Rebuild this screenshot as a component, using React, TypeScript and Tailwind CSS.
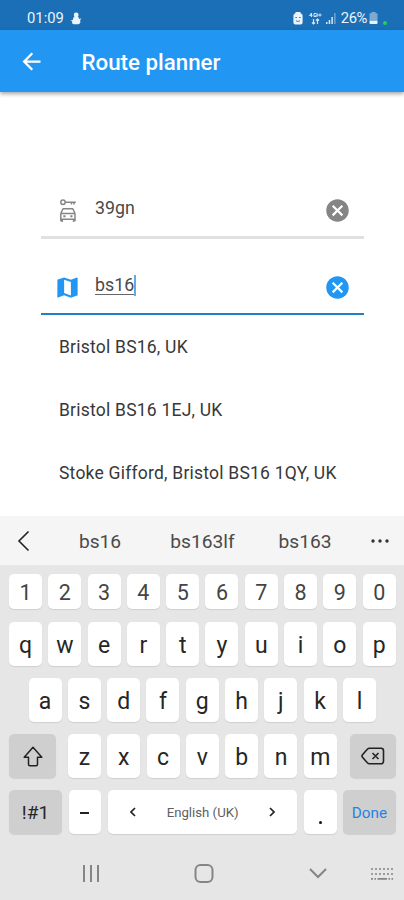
import type { ReactNode } from "react";
import { MdArrowBack, MdCancel, MdMap } from "react-icons/md";

function StatusBar() {
  return (
    <div className="flex h-[30px] items-center bg-[#1b6fb6] pt-[6px] pr-[17px] pl-[27px] text-[14.800px] text-[#eaf4fc]">
      <span className="mt-[1px] w-[43px] leading-none">01:09</span>
      <svg width="12" height="13" viewBox="0 0 12 13" fill="currentColor">
        <circle cx="6.2" cy="3" r="2.4" />
        <path d="M4.4 4.5 8 4.5 9.4 7l2-.8-1.3 2c1 2-.2 3.600-1.600 4H3.800C2 12 1.800 10.500 2.200 9.500L.5 8.400l2.400-.4C2.900 6.200 3.700 5.300 4.400 4.500Z" />
      </svg>
      <div className="ml-auto flex items-center">
        <svg className="mt-[1px]" width="10" height="13" viewBox="0 0 10 13">
          <path d="M2.500 0h5v1.200C9 1.600 9.600 2.600 9.600 4v6.500a2 2 0 0 1-2 2H2.400a2 2 0 0 1-2-2V4c0-1.400.6-2.400 2.100-2.800Z" fill="#eaf4fc" />
          <path d="M2.300 5.500h1.700M6 5.500h1.700M3 8.700c1.400 1 2.700 1 4 0" stroke="#4c7fac" strokeWidth="1" fill="none" />
        </svg>
        <svg className="mt-[1px] ml-[6px]" width="13" height="13" viewBox="0 0 13 13" stroke="#d5e6f4" fill="none">
          <path d="M2.500 5V1L.5 3.600h3M7 1.500H5v3h2V3M8 1v4M8 3h1.500M9.500 3h3M11 1.500v3" strokeWidth="1" />
          <path d="M4.500 7v5M3 10.500 4.500 12 6 10.500M8.500 12V7M7 8.500 8.500 7 10 8.500" strokeWidth="1.200" />
        </svg>
        <svg className="mt-[1px] ml-[3px]" width="12" height="12" viewBox="0 0 12 12" fill="#d5e6f4">
          <path d="M1 10h1.500v2H1zM3.700 8h1.500v4H3.700zM6.400 5h1.500v7H6.400z" />
          <path d="M9.100 1h1.500v11H9.100z" opacity=".45" />
        </svg>
        <span className="mt-[1px] ml-[4px] leading-none tracking-[-0.400px]">26%</span>
        <svg className="mt-[1px] ml-[2px]" width="9" height="12" viewBox="0 0 9 12">
          <path d="M2.500 0h4v1.200H8.500V8H.5V1.200h2Z" fill="#7fa9cf" />
          <path d="M.5 8.500h8v2.500a1 1 0 0 1-1 1h-6a1 1 0 0 1-1-1Z" fill="#eaf4fc" />
        </svg>
        <span className="mt-[10px] ml-[5px] h-1 w-1 rounded-full bg-[#22d05a]" />
      </div>
    </div>
  );
}

function Header() {
  return (
    <header className="relative flex h-[62px] shrink-0 items-center bg-[#2196f3] pt-[1px] pl-[18px] text-white shadow-[0_2px_4px_rgba(0,0,0,0.35)]">
      <MdArrowBack size={27} />
      <h1 className="mt-[2px] ml-[36.500px] text-[22.300px] font-medium">Route planner</h1>
    </header>
  );
}

function CarKeyIcon() {
  return (
    <svg className="ml-[5px]" width="18" height="24" viewBox="0 0 18 24" fill="none" stroke="currentColor" strokeWidth="1.500">
      <circle cx="4" cy="3.200" r="2.200" />
      <path d="M6.300 3.200H16.800M12.500 3.200v2.300M15 3.200v2.300" />
      <path d="M1.800 14.500 4 9.800h9.800l2.200 4.700M1.800 14.500v7.700M16 14.500v7.700M1.800 14.500h14.200M1.800 20.300h14.200M3.200 20.300v2.800M14.600 20.300v2.800" strokeLinejoin="round" />
      <path d="M4.300 17.200h2.200M11.300 17.200h2.200" strokeWidth="2" />
    </svg>
  );
}

function Field({ icon, children, active = false }: { icon: ReactNode; children: ReactNode; active?: boolean }) {
  return (
    <div
      className={
        active
          ? "flex h-[76px] items-center border-b-2 border-[#1f80c6] pt-[23px] pr-[13px] pl-[13px] text-[#2196f3]"
          : "flex h-[56px] items-center border-b-[3px] border-[#e0e0e0] pt-[2px] pr-[13px] pl-[13px] text-[#858585]"
      }
    >
      <span className="flex w-[41px]">{icon}</span>
      <span className="-mt-[5px] flex flex-1 items-center text-[17.800px] text-[#4a4a4a]">{children}</span>
      <MdCancel size={27} />
    </div>
  );
}

const places = ["Bristol BS16, UK", "Bristol BS16 1EJ, UK", "Stoke Gifford, Bristol BS16 1QY, UK"];

function Key({ children, className = "h-[43.500px] w-[33px] bg-white pt-[4px] text-[23px]" }: { children: ReactNode; className?: string }) {
  return (
    <div className={"flex shrink-0 items-center justify-center rounded-[5px] text-[#262626] shadow-[0_1px_1px_rgba(0,0,0,0.10)] " + className}>
      {children}
    </div>
  );
}

function Chevron({ d }: { d: string }) {
  return (
    <svg width="6" height="10" viewBox="0 0 6 10" fill="none" stroke="#222" strokeWidth="1.700">
      <path d={d} />
    </svg>
  );
}

function Keyboard() {
  return (
    <section className="flex flex-1 flex-col bg-[#e6e6e6]">
      <div className="flex h-[49px] shrink-0 items-center bg-[#f5f5f5] text-[19.200px] text-[#4a4a4a]">
        <svg className="ml-[17px]" width="13" height="22" viewBox="0 0 13 22" fill="none" stroke="#222" strokeWidth="1.600">
          <path d="M11.500 1.500 2 11l9.500 9.500" />
        </svg>
        <span className="mt-[3px] ml-[19px] w-[102px] text-center">bs16</span>
        <span className="mt-[3px] w-[103px] text-center">bs163lf</span>
        <span className="mt-[3px] w-[102px] text-center">bs163</span>
        <svg className="ml-[15px]" width="18" height="4" viewBox="0 0 18 4" fill="#333">
          <circle cx="2" cy="2" r="1.700" />
          <circle cx="9" cy="2" r="1.700" />
          <circle cx="16" cy="2" r="1.700" />
        </svg>
      </div>
      <div className="flex flex-col pt-[8.500px] pr-[8px] pl-[9px]">
        <div className="flex gap-[6.300px]">
          {[..."1234567890"].map((k) => (
            <Key key={k} className="h-[35.500px] w-[33px] bg-white pt-[4px] text-[21.500px]">
              <span className="text-[#444]">{k}</span>
            </Key>
          ))}
        </div>
        <div className="mt-[13px] flex gap-[6.300px]">
          {[..."qwertyuiop"].map((k) => <Key key={k}>{k}</Key>)}
        </div>
        <div className="mt-[12.500px] flex gap-[6.300px] pl-[19.600px]">
          {[..."asdfghjkl"].map((k) => <Key key={k}>{k}</Key>)}
        </div>
        <div className="mt-[12.500px] flex">
          <Key className="mr-[12px] h-[44px] w-[47px] bg-[#cfcfcf]">
            <svg width="20" height="21" viewBox="0 0 20 21" fill="none" stroke="#222" strokeWidth="1.500" strokeLinejoin="round">
              <path d="M10 1.200 1.200 11.300h4.300v6.900a1.500 1.500 0 0 0 1.500 1.500h6a1.500 1.500 0 0 0 1.500-1.500v-6.900h4.300Z" />
            </svg>
          </Key>
          <div className="flex flex-1 gap-[6.300px]">
            {[..."zxcvbnm"].map((k) => <Key key={k}>{k}</Key>)}
          </div>
          <Key className="h-[44px] w-[46.500px] bg-[#cfcfcf]">
            <svg width="24" height="18" viewBox="0 0 24 18" fill="none" stroke="#222" strokeWidth="1.600" strokeLinejoin="round">
              <path d="M8.500 1.200h11.500a2.500 2.500 0 0 1 2.500 2.500v10.600a2.500 2.500 0 0 1-2.500 2.500H8.500c-1 0-1.500-.3-2.200-1L1.500 10.300c-.7-.8-.7-1.800 0-2.600l4.800-5.500c.7-.7 1.200-1 2.200-1ZM11.500 6l6 6M17.500 6l-6 6" />
            </svg>
          </Key>
        </div>
        <div className="mt-[12px] flex gap-[6.700px]">
          <Key className="h-[44px] w-[53px] bg-[#cfcfcf] pt-[2px] text-[19px]">!#1</Key>
          <Key className="h-[44px] w-[32.500px] bg-white">
            <span className="mt-[2px] h-[2px] w-[9px] bg-[#222]" />
          </Key>
          <Key className="h-[44px] w-[189.500px] bg-white">
            <Chevron d="M5 1 1 5l4 4" />
            <span className="w-[133px] pt-[2px] text-center text-[13.200px] text-[#606060]">English (UK)</span>
            <Chevron d="M1 1l4 4-4 4" />
          </Key>
          <Key className="h-[44px] w-[32.500px] bg-white">
            <span className="mt-[20px] h-[3px] w-[3px] rounded-full bg-[#111]" />
          </Key>
          <Key className="h-[44px] w-[52.500px] bg-[#cfcfcf]">
            <span className="pt-[2px] text-[15.300px] text-[#2583e4]">Done</span>
          </Key>
        </div>
      </div>
      <nav className="flex flex-1 items-center pt-[13px] text-[#858585]">
        <svg className="ml-[82px]" width="18" height="17" viewBox="0 0 18 17" stroke="currentColor" strokeWidth="2">
          <path d="M2 0v17M9 0v17M16 0v17" />
        </svg>
        <svg className="ml-[94px]" width="20" height="19" viewBox="0 0 20 19" fill="none" stroke="currentColor" strokeWidth="2">
          <rect x="1.500" y="1" width="17" height="17" rx="5" />
        </svg>
        <svg className="ml-[95px]" width="18" height="11" viewBox="0 0 18 11" fill="none" stroke="currentColor" strokeWidth="2">
          <path d="m1 1 8 8 8-8" />
        </svg>
        <svg className="ml-[44px]" width="22" height="12" viewBox="0 0 22 12" fill="none" stroke="currentColor" strokeWidth="1.700">
          <path d="M0 1h22M0 6h22" strokeDasharray="2 2" />
          <path d="M0 10.800h2M3.500 10.800h1.500M6.500 10.800h9.500M17.500 10.800h1.500M20.500 10.800h1.500" />
        </svg>
      </nav>
    </section>
  );
}

export default function App() {
  return (
    <main className="flex h-[900px] w-[404px] flex-col overflow-hidden bg-white font-[Roboto,sans-serif]">
      <StatusBar />
      <Header />
      <div className="flex h-[424px] shrink-0 flex-col pt-[91px] pr-[40px] pl-[41px]">
        <Field icon={<CarKeyIcon />}>39gn</Field>
        <Field active icon={<MdMap size={27} />}>
          <span className="border-b border-[#666] leading-[18px]">bs16</span>
          <span className="h-[21px] w-[2px] bg-[#62aae8]" />
        </Field>
        <ul className="ml-[18px] text-[17.500px] tracking-[0.220px] whitespace-nowrap text-[#383838]">
          {places.map((p) => <li key={p} className="flex h-[63px] items-center pt-[1px]">{p}</li>)}
        </ul>
      </div>
      <Keyboard />
    </main>
  );
}
